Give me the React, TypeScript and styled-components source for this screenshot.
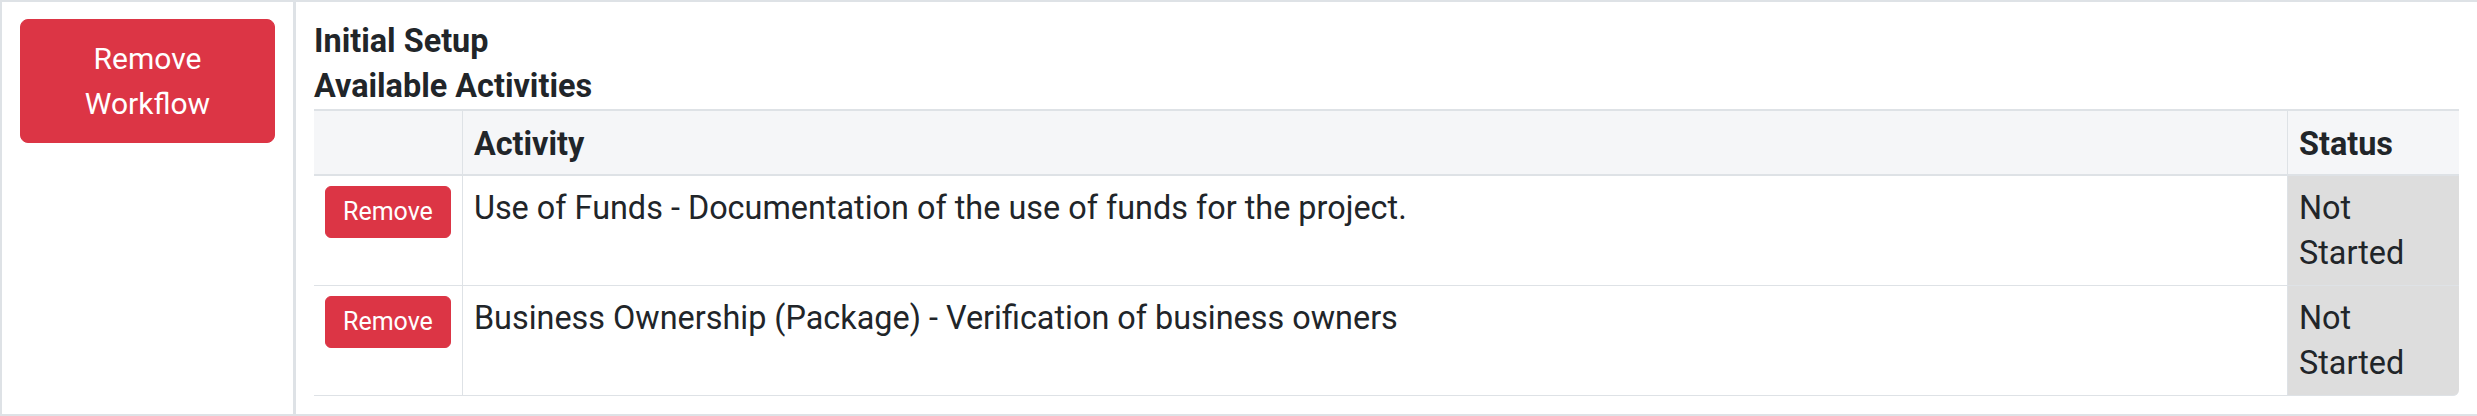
import styled, { createGlobalStyle } from "styled-components";

const GlobalStyle = createGlobalStyle`
  html, body {
    margin: 0;
    padding: 0;
    background: #fff;
    overflow: hidden;
  }
  body {
    font-family: Roboto, "Liberation Sans", sans-serif;
    color: #212529;
  }
  * {
    box-sizing: border-box;
  }
`;

const borderColor = "#dee2e6";
const danger = "#dc3545";

const Frame = styled.div`
  display: flex;
  align-items: stretch;
  border-top: 2px solid ${borderColor};
  border-left: 2px solid ${borderColor};
  border-bottom: 2px solid ${borderColor};
`;

const SideCell = styled.div`
  width: 294px;
  flex: none;
  padding: 17px 18px 0 18px;
  border-right: 3px solid ${borderColor};
`;

const MainCell = styled.div`
  flex: 1;
  min-width: 0;
  padding: 17px 18px 18px 18px;
`;

const Button = styled.button<{ $small?: boolean }>`
  display: inline-block;
  font-family: inherit;
  color: #fff;
  background: ${danger};
  border: 1px solid ${danger};
  cursor: pointer;
  text-align: center;
  font-size: ${(p) => (p.$small ? "25px" : "30px")};
  line-height: ${(p) => (p.$small ? "37.5px" : "45px")};
  padding: ${(p) => (p.$small ? "6.25px 17px" : "16px 22px")};
  border-radius: ${(p) => (p.$small ? "6px" : "8px")};
  width: ${(p) => (p.$small ? "auto" : "100%")};
  white-space: ${(p) => (p.$small ? "nowrap" : "normal")};
`;

const Heading = styled.div`
  font-size: 32.4px;
  font-weight: 700;
  line-height: 45px;
`;

const Table = styled.table`
  width: 100%;
  border-collapse: separate;
  border-spacing: 0;
  font-size: 32.4px;
  line-height: 45px;
  border-top: 2px solid ${borderColor};
`;

const HeadCell = styled.th<{ $first?: boolean; $status?: boolean }>`
  text-align: left;
  font-weight: 700;
  background: #f5f6f8;
  padding: 11px 11px 7px 11px;
  border-bottom: 2px solid ${borderColor};
  border-left: ${(p) => (p.$first ? "none" : `1px solid ${borderColor}`)};
  width: ${(p) => (p.$first ? "1%" : p.$status ? "172px" : "auto")};
`;

const Cell = styled.td<{ $first?: boolean; $status?: boolean; $last?: boolean }>`
  vertical-align: top;
  padding: 10px 11px 9px 11px;
  border-bottom: 1px solid ${borderColor};
  border-left: ${(p) => (p.$first ? "none" : `1px solid ${borderColor}`)};
  background: ${(p) => (p.$status ? "#dddddd" : "transparent")};
  border-bottom-right-radius: ${(p) => (p.$last && p.$status ? "6px" : "0")};
  white-space: ${(p) => (p.$first ? "nowrap" : "normal")};
`;

const activities = [
  {
    name: "Use of Funds - Documentation of the use of funds for the project.",
    status: "Not Started",
  },
  {
    name: "Business Ownership (Package) - Verification of business owners",
    status: "Not Started",
  },
];

export default function App() {
  return (
    <>
      <GlobalStyle />
      <Frame>
        <SideCell>
          <Button>Remove Workflow</Button>
        </SideCell>
        <MainCell>
          <Heading>Initial Setup</Heading>
          <Heading>Available Activities</Heading>
          <Table>
            <thead>
              <tr>
                <HeadCell $first></HeadCell>
                <HeadCell>Activity</HeadCell>
                <HeadCell $status>Status</HeadCell>
              </tr>
            </thead>
            <tbody>
              {activities.map((a, i) => (
                <tr key={a.name}>
                  <Cell $first>
                    <Button $small>Remove</Button>
                  </Cell>
                  <Cell>{a.name}</Cell>
                  <Cell $status $last={i === activities.length - 1}>
                    {a.status}
                  </Cell>
                </tr>
              ))}
            </tbody>
          </Table>
        </MainCell>
      </Frame>
    </>
  );
}
